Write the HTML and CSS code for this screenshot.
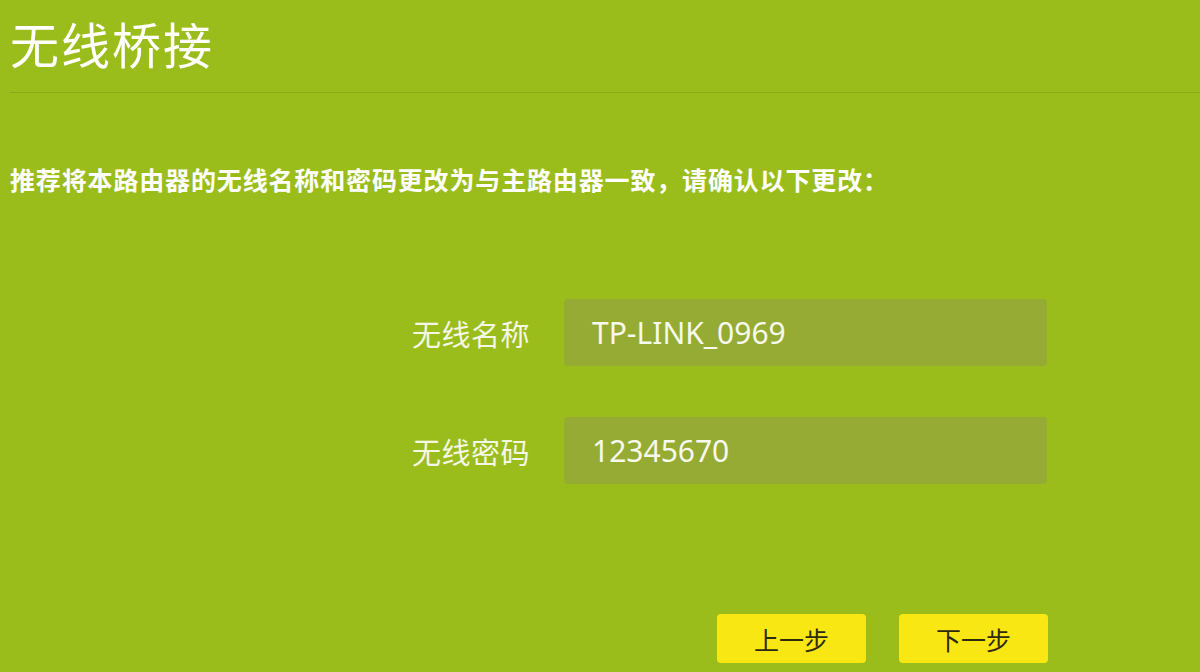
FILE: index.html
```html
<!DOCTYPE html>
<html lang="zh-CN">
<head>
<meta charset="utf-8">
<title>无线桥接</title>
<link rel="stylesheet" href="styles.css">
</head>
<body>
<div class="page">
  <header class="header">
    <h1 class="title">无线桥接</h1>
  </header>
  <p class="notice">推荐将本路由器的无线名称和密码更改为与主路由器一致，请确认以下更改：</p>
  <div class="form">
    <div class="row">
      <span class="label">无线名称</span>
      <div class="field">TP-LINK_0969</div>
    </div>
    <div class="row">
      <span class="label">无线密码</span>
      <div class="field">12345670</div>
    </div>
  </div>
  <div class="actions">
    <button class="btn" type="button">上一步</button>
    <button class="btn" type="button">下一步</button>
  </div>
</div>
</body>
</html>
```
FILE: styles.css
```css
html, body {
  margin: 0;
  padding: 0;
}
body {
  background: #9bbd1c;
  color: #ffffff;
  font-family: "Noto Sans CJK SC", "Noto Sans", sans-serif;
  width: 1200px;
  height: 672px;
  overflow: hidden;
}
.page {
  padding-left: 10px;
}
.header {
  border-bottom: 1px solid #8aab18;
  height: 93px;
  box-sizing: border-box;
}
.title {
  margin: 0;
  padding-top: 16px;
  font-size: 49px;
  font-weight: 400;
  line-height: 54px;
  letter-spacing: 2px;
}
.notice {
  margin: 66px 0 0 0;
  font-size: 25px;
  line-height: 40px;
  font-weight: 700;
  letter-spacing: 0.85px;
}
.form {
  margin-top: 100px;
  padding-left: 402px;
  display: flex;
  flex-direction: column;
  gap: 51px;
}
.row {
  display: flex;
  align-items: center;
  gap: 34px;
}
.label {
  width: 118px;
  font-size: 29px;
  letter-spacing: 0.5px;
  color: #f4f7e6;
  white-space: nowrap;
}
.field {
  width: 483px;
  height: 67px;
  box-sizing: border-box;
  background: #95ab34;
  border-radius: 4px;
  padding-left: 28px;
  display: flex;
  align-items: center;
  font-family: "Noto Sans", "Open Sans", sans-serif;
  font-size: 30px;
  color: #f7f9ee;
}
.actions {
  margin-top: 130px;
  width: 1038px;
  display: flex;
  justify-content: flex-end;
  gap: 33px;
}
.btn {
  width: 149px;
  height: 49px;
  border: none;
  border-radius: 4px;
  background: #f9e714;
  color: #2e2a10;
  font-family: "Noto Sans CJK SC", sans-serif;
  font-size: 25px;
  padding: 0;
  cursor: pointer;
}
```
